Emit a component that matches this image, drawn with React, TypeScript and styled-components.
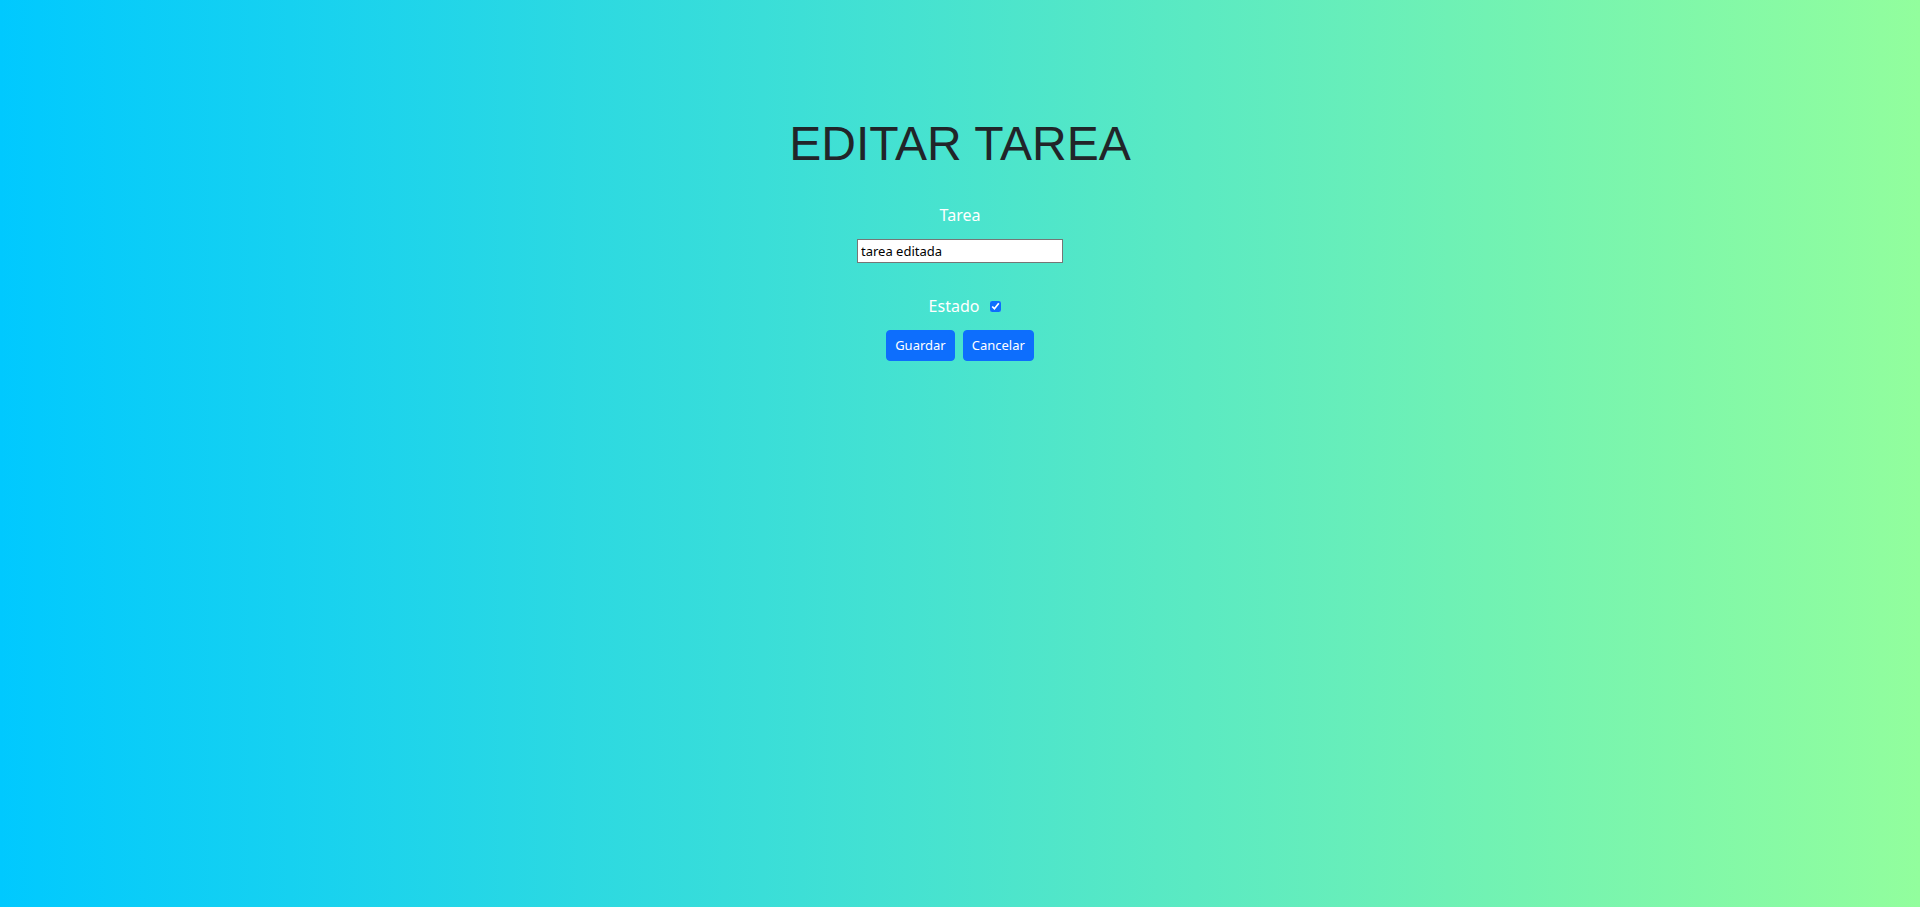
import React, { useState } from "react";
import styled, { createGlobalStyle } from "styled-components";

const GlobalStyle = createGlobalStyle`
  html, body {
    margin: 0;
    padding: 0;
    min-height: 100%;
  }
  body {
    font-family: "Noto Sans", "Open Sans", sans-serif;
  }
  * { box-sizing: border-box; }
`;

const Page = styled.div`
  min-height: 907px;
  background: linear-gradient(to right, #00c9ff, #92fe9d);
  display: flex;
  flex-direction: column;
  align-items: center;
  padding-top: 116px;
`;

const Title = styled.h1`
  margin: 0;
  font-family: "Liberation Sans", Arial, sans-serif;
  font-weight: 400;
  font-size: 48px;
  line-height: 56px;
  color: #212529;
`;

const Form = styled.form`
  display: flex;
  flex-direction: column;
  align-items: center;
  margin-top: 31px;
`;

const Label = styled.label`
  display: block;
  font-size: 16px;
  line-height: 24px;
  color: #ffffff;
`;

const TextInput = styled.input`
  margin-top: 12px;
  width: 206px;
  height: 24px;
  padding: 1px 3px;
  border: 1px solid #767676;
  border-radius: 0;
  background: #ffffff;
  color: #000000;
  font-family: "Noto Sans", sans-serif;
  font-size: 13px;
  outline: none;
`;

const CheckRow = styled.div`
  display: flex;
  align-items: center;
  gap: 11px;
  margin-top: 31px;
  padding-left: 10px;
`;

const Check = styled.input`
  margin: 0;
  width: 11px;
  height: 11px;
  accent-color: #0d6efd;
`;

const Actions = styled.div`
  display: flex;
  gap: 8px;
  margin-top: 12px;
`;

const Button = styled.button`
  height: 31px;
  padding: 0 8px;
  border: 1px solid #0d6efd;
  border-radius: 4px;
  background: #0d6efd;
  color: #ffffff;
  font-family: "Noto Sans", sans-serif;
  font-size: 13px;
  line-height: 1.5;
  cursor: pointer;
`;

export default function App() {
  const [task, setTask] = useState("tarea editada");
  const [done, setDone] = useState(true);
  return (
    <>
      <GlobalStyle />
      <Page>
        <Title>EDITAR TAREA</Title>
        <Form onSubmit={(e) => e.preventDefault()}>
          <Label htmlFor="tarea">Tarea</Label>
          <TextInput
            id="tarea"
            type="text"
            value={task}
            onChange={(e) => setTask(e.target.value)}
          />
          <CheckRow>
            <Label htmlFor="estado">Estado</Label>
            <Check
              id="estado"
              type="checkbox"
              checked={done}
              onChange={(e) => setDone(e.target.checked)}
            />
          </CheckRow>
          <Actions>
            <Button type="submit">Guardar</Button>
            <Button type="button">Cancelar</Button>
          </Actions>
        </Form>
      </Page>
    </>
  );
}
